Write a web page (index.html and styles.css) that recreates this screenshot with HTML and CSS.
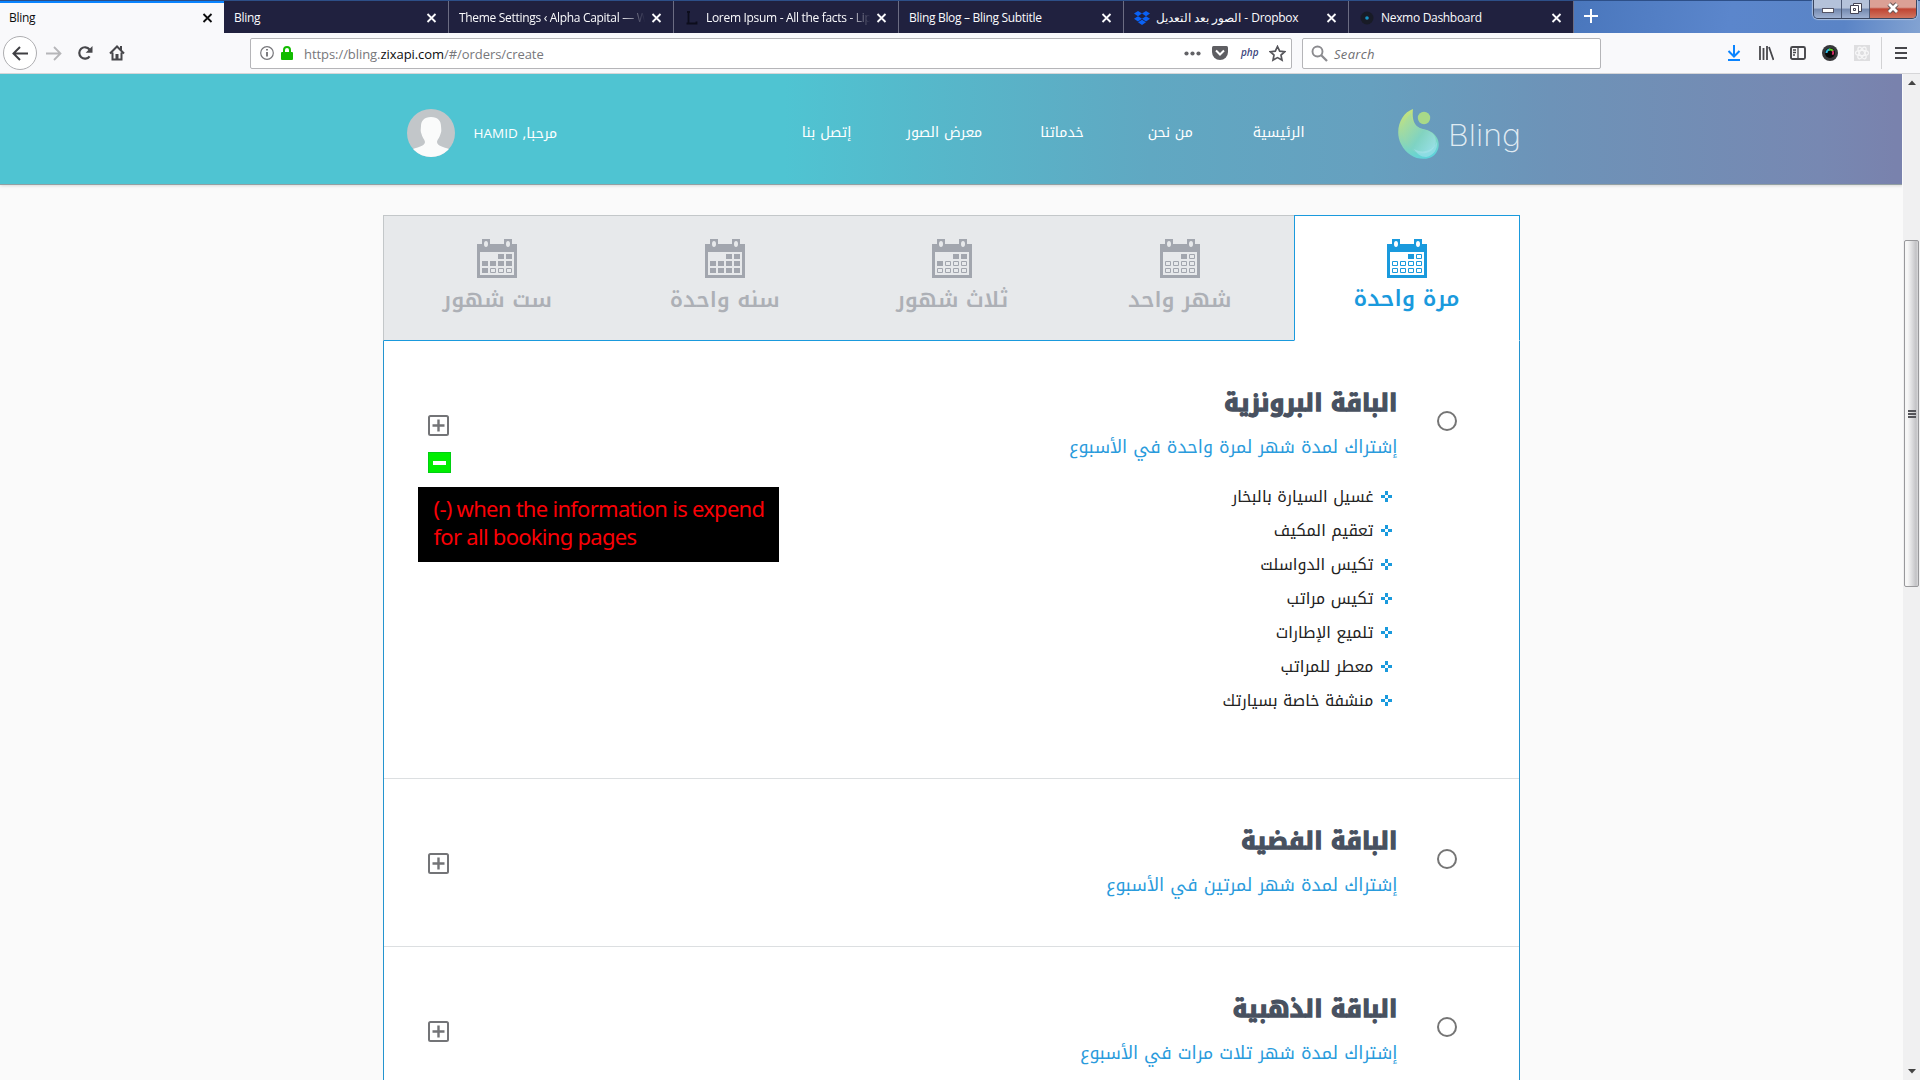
FILE: index.html
```html
<!DOCTYPE html>
<html lang="ar">
<head>
<meta charset="utf-8">
<title>Bling</title>
<link rel="stylesheet" href="styles.css">
</head>
<body>
<svg class="defs" width="0" height="0" aria-hidden="true">
  <symbol id="x" viewBox="0 0 10 10"><path d="M1 1l8 8M9 1l-8 8" stroke="currentColor" stroke-width="1.8" fill="none"/></symbol>
  <symbol id="cal" viewBox="0 0 40 39">
    <path fill="currentColor" fill-rule="evenodd" d="M5 5V0h8v5h14V0h8v5h5v34H0V5zM3 13v23h34V13zM9 2a2 3 0 0 0 0 6a2 3 0 0 0 0-6zM31 2a2 3 0 0 0 0 6a2 3 0 0 0 0-6z"/>
    <g fill="none" stroke="currentColor"><path d="M21.5 15.5h5v4h-5zM29.5 15.5h5v4h-5zM5.500 22.500h5v4h-5zM13.500 22.500h5v4h-5zM21.500 22.500h5v4h-5zM29.500 22.500h5v4h-5zM5.500 29.500h5v4h-5zM13.500 29.500h5v4h-5zM21.500 29.500h5v4h-5zM29.500 29.500h5v4h-5z"/></g>
  </symbol>
  <symbol id="plus" viewBox="0 0 21 21"><rect x="1" y="1" width="19" height="19" rx="1.500" fill="none" stroke="currentColor" stroke-width="2"/><path d="M4.500 10.500h12M10.500 4.500v12" stroke="currentColor" stroke-width="2.400"/></symbol>
</svg>

<div class="titlebar">
  <div class="tab active"><span class="label">Bling</span><svg class="close"><use href="#x"/></svg></div>
  <div class="tab"><span class="label">Bling</span><svg class="close"><use href="#x"/></svg></div>
  <div class="tab"><span class="label fade">Theme Settings ‹ Alpha Capital — W</span><svg class="close"><use href="#x"/></svg></div>
  <div class="tab icon"><svg class="fav" viewBox="0 0 14 14"><path d="M2 1h3M3.500 1v11.500M1.500 12.500h10v-2" stroke="#0c0d1c" stroke-width="1.800" fill="none"/></svg><span class="label fade">Lorem Ipsum - All the facts - Lip</span><svg class="close"><use href="#x"/></svg></div>
  <div class="tab"><span class="label">Bling Blog – Bling Subtitle</span><svg class="close"><use href="#x"/></svg></div>
  <div class="tab icon"><svg class="fav" viewBox="0 0 16 14"><path fill="#0a62f5" d="M4 0l4 2.600-4 2.600L0 2.600zM12 0l4 2.600-4 2.600-4-2.600zM4 5.200l4 2.600-4 2.600-4-2.600zM12 5.200l4 2.600-4 2.600-4-2.600zM8 8.800l4 2.500L8 14l-4-2.700z"/></svg><span class="label" dir="ltr"><bdi>الصور بعد التعديل</bdi> - Dropbox</span><svg class="close"><use href="#x"/></svg></div>
  <div class="tab icon"><svg class="fav" viewBox="0 0 14 14"><circle cx="7" cy="7" r="6.500" fill="#181b26"/><circle cx="7" cy="7" r="1.800" fill="#1593c4"/></svg><span class="label">Nexmo Dashboard</span><svg class="close"><use href="#x"/></svg></div>
  <svg class="newtab" viewBox="0 0 14 14"><path d="M7 0v14M0 7h14" stroke="#fff" stroke-width="2"/></svg>
  <div class="winbtns">
    <span class="wb"><svg width="14" height="18"><rect x="1.500" y="8.500" width="11" height="4" fill="#fff" stroke="#556"/></svg></span>
    <span class="wb"><svg width="14" height="18" fill="#fff" stroke="#445" ><path d="M4.500 3.500h8v8h-8z"/><path fill-rule="evenodd" d="M1.500 5.500h8v8h-8zM4.500 8.500v2h2v-2z"/></svg></span>
    <span class="wb red"><svg width="14" height="18"><path d="M3 4l8 8M11 4l-8 8" stroke="#655" stroke-width="4.600"/><path d="M3 4l8 8M11 4l-8 8" stroke="#fff" stroke-width="2.800"/></svg></span>
  </div>
</div>

<div class="toolbar">
  <span class="back"><svg width="17" height="15" viewBox="0 0 17 15"><path d="M16 7.500H1.500M8 1L1.500 7.500 8 14" fill="none" stroke="#3f3f43" stroke-width="2"/></svg></span>
  <svg class="fwd" width="17" height="15" viewBox="0 0 17 15"><path d="M1 7.500h14.500M9 1l6.500 6.500L9 14" fill="none" stroke="#b6b6b9" stroke-width="1.800"/></svg>
  <svg class="reload" width="16" height="16" viewBox="0 0 16 16"><path d="M12.600 11.300A5.700 5.700 0 1 1 12.500 4.500" fill="none" stroke="#47474b" stroke-width="2.200"/><path d="M15.500 1v6.800H8.700z" fill="#47474b"/></svg>
  <svg class="home" width="16" height="16" viewBox="0 0 16 16"><path d="M1 8.500L8 1.500l7 7M3.500 7.500V14.500h9V7.500" fill="none" stroke="#47474b" stroke-width="2"/><path d="M6.500 9h3v5h-3zM11 1h2v4h-2z" fill="#47474b"/></svg>
  <div class="url">
    <svg width="14" height="14" viewBox="0 0 14 14"><circle cx="7" cy="7" r="6.300" fill="none" stroke="#77777b" stroke-width="1.200"/><path d="M7 6v4.500M7 3v1.600" stroke="#66666a" stroke-width="1.700"/></svg>
    <svg class="lock" width="12" height="14" viewBox="0 0 12 14"><rect y="6" width="12" height="8" rx="1" fill="#12bc00"/><path d="M3 7V4a3 3 0 0 1 6 0v3" fill="none" stroke="#12bc00" stroke-width="2"/></svg>
    <span class="addr">https://bling.<b>zixapi.com</b>/#/orders/create</span>
    <span class="acts">
      <svg width="17" height="5" fill="#626266"><circle cx="2.500" cy="2.500" r="2.100"/><circle cx="8.500" cy="2.500" r="2.100"/><circle cx="14.500" cy="2.500" r="2.100"/></svg>
      <svg width="16" height="14" viewBox="0 0 16 14"><path d="M1.500 0h13Q16 0 16 1.500V6a8 8 0 0 1-16 0V1.500Q0 0 1.500 0z" fill="#5e5e62"/><path d="M4 4.500l4 4 4-4" fill="none" stroke="#fff" stroke-width="2"/></svg>
      <i class="php">php</i>
      <svg width="17" height="17" viewBox="0 0 17 17"><path d="M8.500 1.500l2.200 4.600 5 .6-3.700 3.400 1 5-4.500-2.500L4 15.100l1-5L1.300 6.700l5-.6z" fill="none" stroke="#55555a" stroke-width="1.700"/></svg>
    </span>
  </div>
  <div class="search">
    <svg width="17" height="17" viewBox="0 0 17 17"><circle cx="6.500" cy="6.500" r="5" fill="none" stroke="#8b8b8f" stroke-width="1.900"/><path d="M10 10l6 6" stroke="#8b8b8f" stroke-width="2.300"/></svg>
    <i>Search</i>
  </div>
  <div class="tools">
    <svg viewBox="0 0 16 16"><path d="M8 0v11M2.500 6L8 11.500 13.500 6M2 15h12" fill="none" stroke="#0a84ff" stroke-width="2"/></svg>
    <svg viewBox="0 0 16 16"><path d="M2 1v14M5.500 3v12M9 1v14M11 2l4.500 13" fill="none" stroke="#47474b" stroke-width="1.800"/></svg>
    <svg viewBox="0 0 16 16"><rect x="1" y="2" width="14" height="12" rx="1.500" fill="none" stroke="#47474b" stroke-width="1.900"/><path d="M8 2v12M3 5h3M3 7.500h3M3 10h2" stroke="#47474b" stroke-width="1.300"/></svg>
    <svg viewBox="0 0 16 16"><circle cx="8" cy="8" r="8" fill="#38383b"/><circle cx="8" cy="8" r="5" fill="#080808"/><path d="M4.500 8A3.500 3.500 0 0 1 8 4.500" stroke="#2fb8e0" stroke-width="2" fill="none"/><path d="M7 4.700a3.500 3.500 0 0 1 4 1.500" stroke="#5fd32a" stroke-width="2" fill="none"/><path d="M10.500 5.700a3.500 3.500 0 0 1 0 4" stroke="#d82e69" stroke-width="1.800" fill="none"/></svg>
    <svg viewBox="0 0 16 16"><path d="M0 0h16v16H0z" fill="#dedee0"/><g fill="none" stroke="#f6f6f7" stroke-width="1.200"><ellipse cx="8" cy="8" rx="6.500" ry="2.600"/><ellipse cx="8" cy="8" rx="6.500" ry="2.600" transform="rotate(60 8 8)"/><ellipse cx="8" cy="8" rx="6.500" ry="2.600" transform="rotate(120 8 8)"/></g></svg>
    <span class="menu"><svg viewBox="0 0 16 16"><path d="M2 3h12M2 8h12M2 13h12" stroke="#47474b" stroke-width="2"/></svg></span>
  </div>
</div>

<div class="viewport">
<div class="page" dir="rtl">
  <header>
    <svg class="logo" width="126" height="54" viewBox="0 0 126 54" direction="ltr">
      <defs>
        <linearGradient id="g" x1=".3" y1="0" x2=".6" y2="1"><stop offset="0" stop-color="#c5e37c"/><stop offset=".5" stop-color="#92d7b0"/><stop offset="1" stop-color="#5fd3da"/></linearGradient>
        <linearGradient id="h" x1="0" y1="0" x2="1" y2=".8"><stop offset="0" stop-color="#b8e08c"/><stop offset=".6" stop-color="#7dd2c4"/><stop offset="1" stop-color="#a5e2ea"/></linearGradient>
      </defs>
      <path d="M16 1C4 5-3 22 4 36c6 12 18 17 28 14 9-3 12-13 8-20-3-6-9-8-14-9C16 19 15 10 16 1z" fill="url(#g)"/>
      <path d="M14 5C5 13 3 26 9 36c6 9 16 11 23 8 8-4 9-14 3-19-5-4-10-3-14-6-6-4-7-9-7-14z" fill="url(#h)" opacity=".75"/>
      <path d="M17 41c8 5 20 2 23-8 1 9-4 15-11 16-5 0-9-3-12-8z" fill="#a7e3ec" opacity=".6"/>
      <circle cx="27" cy="10" r="6.200" fill="#a9d988"/>
      <text x="51" y="38" textLength="73" lengthAdjust="spacingAndGlyphs">Bling</text>
    </svg>
    <nav><a>الرئيسية</a><a>من نحن</a><a>خدماتنا</a><a>معرض الصور</a><a>إتصل بنا</a></nav>
    <div class="user"><span>مرحبا, <bdi class="name">HAMID</bdi></span>
      <svg width="48" height="48" viewBox="0 0 48 48"><defs><clipPath id="c"><circle cx="24" cy="24" r="24"/></clipPath></defs><g clip-path="url(#c)"><path d="M0 0h48v48H0z" fill="#c2c6c9"/><path d="M24 8c-7 0-10 4-10 9 0 2-1 5 .5 8 1 4 3 5 3.500 8 0 4-7 5-12 7v10h36V40c-5-2-12-3-12-7 .5-3 2.500-4 3.500-8 1.500-3 .5-6 .5-8 0-5-3-9-10-9z" fill="#fafbfb"/></g></svg>
    </div>
  </header>

  <main>
    <div class="periods">
      <div class="period on"><svg viewBox="0 0 40 39"><use href="#cal"/><path d="M21 15h6v5h-6z"/></svg><span>مرة واحدة</span></div>
      <div class="period"><svg viewBox="0 0 40 39"><use href="#cal"/><path d="M21 15h6v5h-6z"/></svg><span>شهر واحد</span></div>
      <div class="period"><svg viewBox="0 0 40 39"><use href="#cal"/><path d="M21 15h6v5h-6zM29 15h6v5h-6zM5 22h6v5H5z"/></svg><span>ثلاث شهور</span></div>
      <div class="period"><svg viewBox="0 0 40 39"><use href="#cal"/><path d="M21 15h6v5h-6zM29 15h6v5h-6zM5 22h6v5H5zM13 22h6v5h-6zM21 22h6v5h-6zM29 22h6v5h-6zM5 29h6v5H5zM13 29h6v5h-6zM21 29h6v5h-6zM29 29h6v5h-6z"/></svg><span>سنه واحدة</span></div>
      <div class="period"><svg viewBox="0 0 40 39"><use href="#cal"/><path d="M21 15h6v5h-6zM29 15h6v5h-6zM5 22h6v5H5zM13 22h6v5h-6zM21 22h6v5h-6zM29 22h6v5h-6zM5 29h6v5H5z"/></svg><span>ست شهور</span></div>
    </div>
    <div class="plans">
      <section class="plan open">
        <span class="radio"></span>
        <div class="info">
          <h2>الباقة البرونزية</h2>
          <p>إشتراك لمدة شهر لمرة واحدة في الأسبوع</p>
          <ul><li>غسيل السيارة بالبخار</li><li>تعقيم المكيف</li><li>تكيس الدواسلت</li><li>تكيس مراتب</li><li>تلميع الإطارات</li><li>معطر للمراتب</li><li>منشفة خاصة بسيارتك</li></ul>
        </div>
        <div class="side" dir="ltr">
          <svg class="plus"><use href="#plus"/></svg>
          <span class="minus"></span>
          <div class="note">(-) when the information is expend<br>for all booking pages</div>
        </div>
      </section>
      <section class="plan">
        <span class="radio"></span>
        <div class="info"><h2>الباقة الفضية</h2><p>إشتراك لمدة شهر لمرتين في الأسبوع</p></div>
        <div class="side" dir="ltr"><svg class="plus"><use href="#plus"/></svg></div>
      </section>
      <section class="plan">
        <span class="radio"></span>
        <div class="info"><h2>الباقة الذهبية</h2><p>إشتراك لمدة شهر تلات مرات في الأسبوع</p></div>
        <div class="side" dir="ltr"><svg class="plus"><use href="#plus"/></svg></div>
      </section>
    </div>
  </main>
</div>
<div class="scrollbar">
  <svg width="8" height="5"><path d="M0 5l4-4.500L8 5z" fill="#444"/></svg>
  <div class="thumb"><i></i><i></i><i></i></div>
  <svg class="down" width="8" height="5"><path d="M0 0l4 4.500L8 0z" fill="#444"/></svg>
</div>
</div>
</body>
</html>
```
FILE: styles.css
```css
* { box-sizing: border-box; }
html, body { margin: 0; height: 1080px; overflow: hidden; }
body {
  display: flex; flex-direction: column;
  background: #fafafa;
  font-family: "Noto Kufi Arabic", "Noto Sans", "DejaVu Sans", sans-serif;
}
svg { display: block; flex: none; }
.defs { position: absolute; }

/* Window title bar with tabs */
.titlebar {
  height: 33px; flex: none; display: flex; padding-top: 1px;
  background: linear-gradient(#2d4f88 0 1px, transparent 1px), linear-gradient(100deg, #4a77bd 82%, #5b86cc 90%, #5a84c6 96%, #83a3d2);
  font: 12px/16px "Open Sans", "Noto Sans", sans-serif;
}
.tab {
  width: 225px; flex: none; display: flex; align-items: center;
  padding: 2px 11px 0 10px; background: #20213f; color: #fbfbfd; border-right: 1px solid #6b6c82;
}
.tab.active { width: 224px; background: #f9f9fb; color: #0c0c0d; border: 0; border-top: 2px solid #0a84ff; padding: 0 11px 0 9px; }
.fav { width: 16px; height: 14px; margin-right: 6px; }
.tab .label { flex: 1; white-space: nowrap; overflow: hidden; letter-spacing: -.31px; }
.fade { -webkit-mask-image: linear-gradient(90deg, #000 86%, transparent 99%); mask-image: linear-gradient(90deg, #000 86%, transparent 99%); }
.close { width: 11px; height: 10px; margin-left: 4px; }
.newtab { width: 14px; height: 14px; margin: 8px 0 0 10px; }
.winbtns {
  margin: -1px 3px 0 auto; width: 104px; height: 19px; display: flex;
  border: 1px solid #39455f; border-top: 0; border-radius: 0 0 5px 5px; overflow: hidden; box-shadow: 0 0 1px 1px #a9bfe0;
}
.wb { width: 28px; display: flex; justify-content: center; border-right: 1px solid #4b5874; background: linear-gradient(#b4c2da 45%, #7388ae 50%, #a0b2d2); }
.wb.red { flex: 1; border: 0; background: linear-gradient(#dba095 40%, #c04432 50%, #cf7560); }

/* Navigation toolbar */
.toolbar {
  height: 41px; flex: none; display: flex; align-items: center;
  background: #f9f9fb; border-bottom: 1px solid #d6d6d8; padding-left: 3px;
  font: 13px/18px "Open Sans", "Noto Sans", sans-serif;
}
.back { width: 34px; height: 34px; border: 1px solid #aeaeb1; border-radius: 50%; background: #fff; display: flex; align-items: center; justify-content: center; }
.fwd { margin-left: 8px; }
.reload { margin-left: 15px; }
.home { margin-left: 16px; }
.url, .search { height: 31px; border: 1px solid #b5b5b8; border-radius: 2px; background: #fff; display: flex; align-items: center; }
.url { width: 1042px; margin-left: 125px; padding: 0 5px 0 9px; }
.lock { margin-left: 7px; }
.addr { margin-left: 11px; color: #77777b; letter-spacing: -.06px; padding-top: 1px; }
.addr b { color: #0c0c0d; font-weight: 400; }
.acts { margin-left: auto; display: flex; align-items: center; gap: 11px; }
.php { font: italic 600 10px/14px "Open Sans", sans-serif; color: #3d467d; width: 17px; margin: -2px 0 0 2px; }
.search { width: 299px; margin-left: 10px; padding-left: 8px; }
.search i { margin-left: 6px; padding-top: 1px; color: #6f6f73; letter-spacing: .3px; }
.tools { margin-left: auto; display: flex; align-items: center; gap: 16px; padding-right: 11px; }
.tools svg { width: 16px; height: 16px; }
.menu { border-left: 1px solid #d2d2d4; padding: 8px 0 8px 11px; margin-left: -5px; }

/* Page */
.viewport { flex: 1; min-height: 0; display: flex; }
.page { width: 1903px; display: flex; flex-direction: column; align-items: center; overflow: hidden; }
header {
  width: 1903px; height: 111px; flex: none; display: flex; align-items: center;
  padding: 8px 380px 0 407px;
  background: linear-gradient(90deg, #4fc4d2 785px, #55b9cb 915px, #60a8c2 1150px, #66a0bf 1370px, #6d93b8 1550px, #7788b2 1820px, #7982ad 1895px);
  border-bottom: 1px solid #93a0a3; box-shadow: 0 1px 3px #0002;
  color: #fff; font-size: 14.2px; line-height: 24px;
}
.logo { margin-left: 92px; margin-top: 3px; }
.logo text { font: 200 30px "Inter", "Lato", sans-serif; fill: #f0f7fa; fill-opacity: .9; }
nav { display: flex; }
nav a { white-space: nowrap; margin-left: 60px; }
nav a:nth-child(2) { margin-left: 64px; }
nav a:nth-child(3) { margin-left: 58px; }
nav a:nth-child(4) { margin-left: 55px; }
nav a:last-child { margin-left: 0; }
.user { display: flex; align-items: center; margin-right: auto; gap: 19px; white-space: nowrap; }
.name { font: 400 13.5px/24px "Open Sans", sans-serif; }
main { width: 1137px; margin-top: 30px; flex: none; }

/* Subscription periods */
.periods { display: flex; height: 126px; }
.period {
  flex: 1; display: flex; flex-direction: column; align-items: center; padding-top: 23px;
  background: #e7e9eb; border-top: 1px solid #c3c7c9; border-bottom: 1px solid #1a9add; color: #a2a6ae;
}
.period:last-child { border-left: 1px solid #c3c7c9; }
.period svg { width: 40px; height: 39px; fill: currentColor; }
.period span { font-weight: 600; font-size: 21.6px; line-height: 36px; margin-top: 4px; color: #adb0b6; }
.period.on { flex: 0 0 226px; background: #fff; color: #1a9add; border: 1px solid #1a9add; border-bottom-color: #fff; }
.period.on span { color: #1a9add; margin-top: 3px; font-size: 22.2px; }

/* Plans */
.plans { background: #fff; border: 1px solid #2494cf; border-top: 0; }
.plan { display: flex; align-items: flex-start; height: 168px; border-bottom: 1px solid #dcdfe1; padding-right: 62px; }
.plan.open { height: 438px; }
.radio { width: 20px; height: 20px; border: 2px solid #757575; border-radius: 50%; margin-top: 70px; }
.info { margin-right: 39px; padding-top: 42px; }
h2 { margin: 0; font-weight: 700; font-size: 24px; line-height: 40px; color: #485160; -webkit-text-stroke: 1.3px #485160; }
.info p { margin: 6px 0 0; font-size: 17.8px; line-height: 36px; color: #2a9bdc; white-space: nowrap; }
ul { margin: 15px 0 0; padding: 0 6px 0 0; list-style: none; font-size: 16px; line-height: 34px; color: #222; }
li { display: flex; align-items: center; gap: 7px; }
li::before {
  content: ""; width: 11px; height: 11px; margin-top: -1px;
  background:
    linear-gradient(#1a9add, #1a9add) 4px 0 / 3px 4px no-repeat,
    linear-gradient(#1a9add, #1a9add) 4px 7px / 3px 4px no-repeat,
    linear-gradient(#1a9add, #1a9add) 0 4px / 4px 3px no-repeat,
    linear-gradient(#1a9add, #1a9add) 7px 4px / 4px 3px no-repeat;
}
.side { margin-right: auto; width: 395px; padding: 74px 0 0 34px; }
.plus { width: 21px; height: 21px; margin-left: 10px; color: #737477; }
.minus { display: flex; width: 23px; height: 21px; margin: 16px 0 14px 10px; background: #00ee00; border: 1px solid #00cf12; align-items: center; justify-content: center; }
.minus::before { content: ""; width: 13px; height: 4px; background: #fff; }
.note { width: 361px; height: 75px; padding: 7px 0 0 16px; background: #000; color: #fa0006; font: 22px/28px "Noto Sans", sans-serif; white-space: nowrap; letter-spacing: -.72px; }

/* Scrollbar */
.scrollbar { flex: 1; display: flex; flex-direction: column; align-items: center; background: #f0f0f1; border-left: 1px solid #fafafa; padding: 6px 1px; }
.thumb {
  width: 15px; height: 347px; margin-top: 155px; border: 1px solid #98989b; border-radius: 2px;
  background: linear-gradient(90deg, #f6f6f6 20%, #dfdfe1 50%, #c2c2c5 85%, #d8d8da);
  display: flex; flex-direction: column; align-items: center; justify-content: center; gap: 1px;
}
.thumb i { width: 8px; height: 2px; background: #55555a; }
.down { margin-top: auto; }
```
